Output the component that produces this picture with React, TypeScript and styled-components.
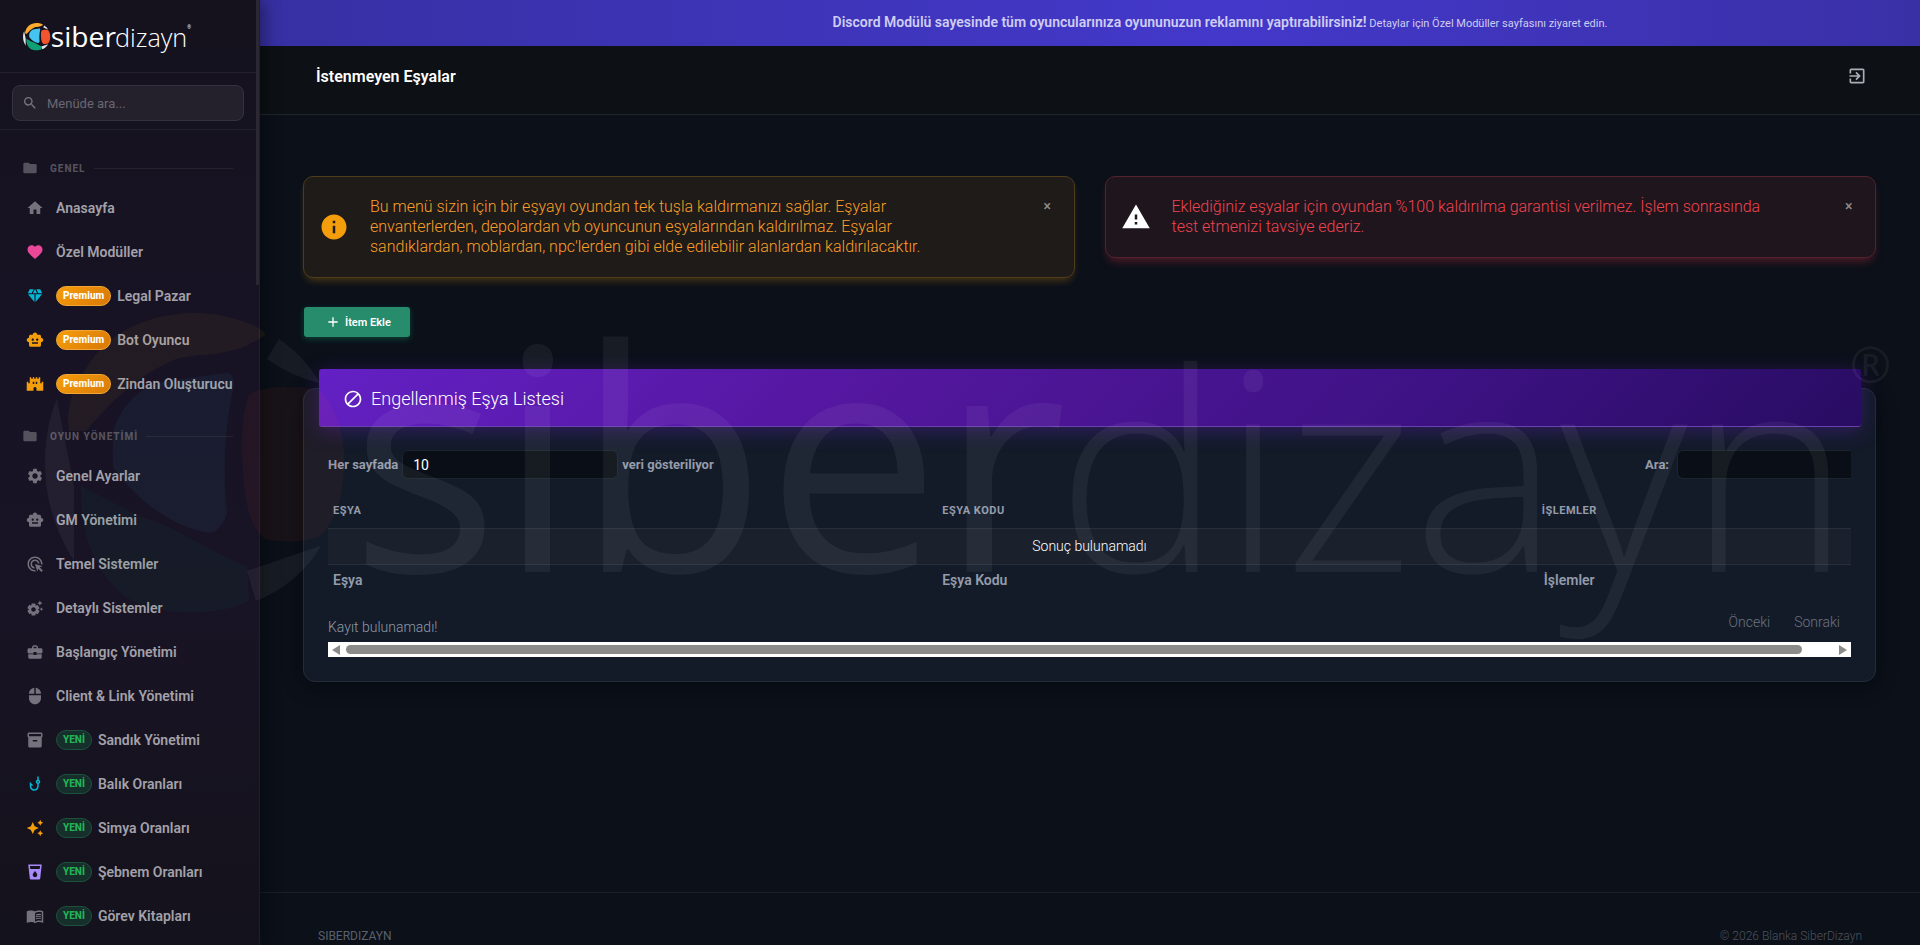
import React from 'react';
import styled, { createGlobalStyle, css } from 'styled-components';
import type { IconType } from 'react-icons';
import {
  MdAdd,
  MdAdsClick,
  MdAutoAwesome,
  MdBusinessCenter,
  MdCastle,
  MdDiamond,
  MdDoNotDisturbAlt,
  MdExitToApp,
  MdFavorite,
  MdFolder,
  MdHome,
  MdInfo,
  MdInventory2,
  MdLocalDrink,
  MdMenuBook,
  MdMouse,
  MdPhishing,
  MdSearch,
  MdSettings,
  MdSettingsSuggest,
  MdSmartToy,
  MdWarning,
} from 'react-icons/md';

const GlobalStyle = createGlobalStyle`
  *, *::before, *::after { box-sizing: border-box; }
  body {
    margin: 0;
    background: #0b1019;
    color: #8b92a5;
    font-family: Roboto, "Liberation Sans", sans-serif;
    font-size: 14px;
    font-weight: 300;
  }
  button, input, select { font: inherit; color: inherit; }
`;

/* ---------- Logo ---------- */

const LogoSvg = styled.svg`
  display: block;
  width: 100%;
  height: auto;
  overflow: visible;
`;

function Logo() {
  return (
    <LogoSvg viewBox="44 311 1848 336" role="img" aria-label="siberdizayn">
      <path fill="#ffab2e" d="M68 430C64 405 74 380 96 352C126 318 180 306 222 315C240 319 262 326 265 334C254 340 242 348 228 350C205 356 186 352 168 361C136 376 108 402 85 430Z" />
      <path fill="#45c4f0" d="M112 432C120 402 142 384 166 380L226 372C236 374 233 386 230 398C223 436 222 476 226 512C224 522 216 532 208 532C172 526 136 500 112 466Z" />
      <path fill="#f2542d" d="M248 394C262 384 300 384 320 390C338 410 345 440 343 470C341 502 332 524 318 536C300 542 276 542 264 538C250 528 243 500 242 466C240 436 242 410 248 394Z" />
      <path fill="#0f9f73" d="M80 485C110 500 132 514 152 520C176 528 204 548 246 566L248 600C218 616 160 616 128 598C96 576 78 534 80 485Z" />
      <path fill="#e6e4ea" d="M56 398L62 430C66 450 70 468 73 486V560C52 526 44 494 44 462C44 438 48 416 56 398Z" />
      <path fill="#e6e4ea" d="M278 338C296 350 310 366 319 382C300 378 284 370 266 358Z" />
      <path fill="#e6e4ea" d="M246 570L320 545C306 570 282 590 255 600Z" />
      <text x="350" y="571" fill="#fff" fontFamily="'Open Sans', sans-serif" fontWeight="400" fontSize="310">siber</text>
      <text x="1056" y="571" fill="#fff" fontFamily="'Open Sans', sans-serif" fontWeight="300" fontSize="278">dizayn</text>
      <text x="1850" y="382" fill="#fff" fontFamily="'Open Sans', sans-serif" fontWeight="400" fontSize="50">®</text>
    </LogoSvg>
  );
}

const Watermark = styled.div`
  position: fixed;
  inset: 0;
  z-index: 20;
  display: flex;
  align-items: center;
  justify-content: center;
  padding: 14px 0 0 16px;
  opacity: 0.055;
  pointer-events: none;
`;

const WatermarkInner = styled.div`
  width: 97%;
`;

/* ---------- Shell ---------- */

const Shell = styled.div`
  display: flex;
  min-height: 100vh;
`;

const Sidebar = styled.aside`
  position: sticky;
  top: 0;
  z-index: 2;
  flex: 0 0 260px;
  height: 100vh;
  overflow: hidden;
  background: linear-gradient(180deg, #15121e 0%, #171324 35%, #191425 62%, #14121c 100%);
  border-right: 1px solid #211e2b;
  box-shadow: 4px 0 16px rgba(0, 0, 0, 0.4);
`;

const SidebarThumb = styled.span`
  position: absolute;
  top: 0;
  right: 0;
  width: 3px;
  height: 285px;
  background: #2b2833;
`;

const Brand = styled.div`
  height: 73px;
  padding: 23px 68px 0 23px;
  border-bottom: 1px solid #24212e;
`;

const SearchWrap = styled.div`
  height: 57px;
  padding: 12px;
  border-bottom: 1px solid #24212e;
`;

const SearchField = styled.label`
  display: flex;
  align-items: center;
  gap: 9px;
  width: 232px;
  height: 36px;
  padding: 0 9px;
  border: 1px solid #35323f;
  border-radius: 8px;
  background: #24212d;
  color: #77747f;
`;

const SearchInput = styled.input`
  flex: 1;
  min-width: 0;
  padding: 0;
  border: 0;
  outline: 0;
  background: transparent;
  font-size: 13px;
  font-weight: 400;
  &::placeholder { color: #6a6772; opacity: 1; }
`;

const Nav = styled.nav`
  padding-top: 8px;
`;

const SectionLabel = styled.h2`
  display: flex;
  align-items: center;
  height: 48px;
  margin: 0;
  padding: 12px 26px 0 22px;
  color: #55525d;
  font-size: 10px;
  font-weight: 800;
  letter-spacing: 1px;
  svg { flex: none; margin-right: 12px; }
  &::after {
    content: "";
    flex: 1;
    height: 1px;
    margin-left: 8px;
    background: #26232f;
  }
`;

const NavList = styled.ul`
  margin: 0;
  padding: 0;
  list-style: none;
`;

const NavLink = styled.a<{ $icon: string }>`
  display: flex;
  align-items: center;
  height: 44px;
  padding-left: 26px;
  color: #a3a1a9;
  font-weight: 600;
  white-space: nowrap;
  text-decoration: none;
  > svg { flex: none; margin-right: 12px; color: ${(p) => p.$icon}; }
`;

const Badge = styled.span<{ $kind: 'premium' | 'new' }>`
  height: 20px;
  margin-right: 6px;
  padding: 0 6px;
  border: 1px solid;
  border-radius: 10px;
  font-size: 10px;
  font-weight: 800;
  line-height: 18px;
  ${(p) =>
    p.$kind === 'premium'
      ? css`
          border-color: #f0a636;
          background: linear-gradient(135deg, #f59e0b, #d97706);
          color: #fff;
        `
      : css`
          border-color: #1c5140;
          background: #172f2b;
          color: #20b457;
        `}
`;

interface Item {
  label: string;
  icon: IconType;
  color?: string;
  badge?: 'premium' | 'new';
}

const general: Item[] = [
  { label: 'Anasayfa', icon: MdHome },
  { label: 'Özel Modüller', icon: MdFavorite, color: '#ec4899' },
  { label: 'Legal Pazar', icon: MdDiamond, color: '#06b6d4', badge: 'premium' },
  { label: 'Bot Oyuncu', icon: MdSmartToy, color: '#f59e0b', badge: 'premium' },
  { label: 'Zindan Oluşturucu', icon: MdCastle, color: '#f59e0b', badge: 'premium' },
];

const game: Item[] = [
  { label: 'Genel Ayarlar', icon: MdSettings },
  { label: 'GM Yönetimi', icon: MdSmartToy },
  { label: 'Temel Sistemler', icon: MdAdsClick },
  { label: 'Detaylı Sistemler', icon: MdSettingsSuggest },
  { label: 'Başlangıç Yönetimi', icon: MdBusinessCenter },
  { label: 'Client & Link Yönetimi', icon: MdMouse },
  { label: 'Sandık Yönetimi', icon: MdInventory2, badge: 'new' },
  { label: 'Balık Oranları', icon: MdPhishing, color: '#06b6d4', badge: 'new' },
  { label: 'Simya Oranları', icon: MdAutoAwesome, color: '#f59e0b', badge: 'new' },
  { label: 'Şebnem Oranları', icon: MdLocalDrink, color: '#a78bfa', badge: 'new' },
  { label: 'Görev Kitapları', icon: MdMenuBook, badge: 'new' },
];

function NavSection({ title, items }: { title: string; items: Item[] }) {
  return (
    <section>
      <SectionLabel>
        <MdFolder size={16} />
        {title}
      </SectionLabel>
      <NavList>
        {items.map(({ label, icon: Icon, color = '#75727d', badge }) => (
          <li key={label}>
            <NavLink href="#" $icon={color}>
              <Icon size={18} />
              {badge && <Badge $kind={badge}>{badge === 'premium' ? 'Premium' : 'YENİ'}</Badge>}
              {label}
            </NavLink>
          </li>
        ))}
      </NavList>
    </section>
  );
}

/* ---------- Main column ---------- */

const Main = styled.div`
  display: flex;
  flex: 1;
  flex-direction: column;
  min-width: 0;
`;

const Banner = styled.div`
  height: 46px;
  padding-left: 260px;
  background: linear-gradient(90deg, #3730a3, #4338ca 58%, #3a30a6);
  color: #cfcdf2;
  font-size: 11px;
  font-weight: 400;
  line-height: 44px;
  text-align: center;
  strong { font-size: 14px; font-weight: 600; }
`;

const TopBar = styled.header`
  display: flex;
  align-items: flex-start;
  justify-content: space-between;
  height: 69px;
  padding: 20px 53px 0 56px;
  border-bottom: 1px solid #20242b;
  background: #0d1115;
`;

const PageTitle = styled.h1`
  margin: 0;
  color: #fff;
  font-size: 16px;
  font-weight: 600;
  line-height: 22px;
`;

const IconButton = styled.button`
  display: flex;
  padding: 0;
  border: 0;
  background: none;
  color: #a9adb8;
  cursor: pointer;
`;

const Content = styled.main`
  flex: 1;
  padding: 61px 44px 30px 43px;
`;

const Alerts = styled.div`
  display: grid;
  grid-template-columns: 1fr 1fr;
  align-items: start;
  gap: 30px;
`;

const Alert = styled.div<{ $tone: 'warning' | 'danger' }>`
  display: flex;
  align-items: center;
  padding: 20px 20px 20px 15px;
  border: 1px solid;
  border-radius: 10px;
  font-size: 16px;
  line-height: 20px;
  ${(p) =>
    p.$tone === 'warning'
      ? css`
          border-color: #4f3c1b;
          background: #1e1b18;
          color: #fb9f28;
          box-shadow: 0 5px 8px -3px rgba(245, 158, 11, 0.3);
        `
      : css`
          border-color: #56212e;
          background: #1f151d;
          color: #f0444f;
          box-shadow: 0 6px 10px -3px rgba(220, 53, 69, 0.35);
        `}
  > svg { flex: none; margin-right: 21px; }
`;

const AlertText = styled.p`
  flex: 1;
  margin: 0;
  padding-right: 72px;
`;

const CloseButton = styled(IconButton)`
  align-self: flex-start;
  width: 10px;
  color: #8f8c8c;
  font-size: 14px;
  font-weight: 500;
  line-height: 18px;
`;

const AddButton = styled.button`
  display: flex;
  align-items: center;
  gap: 4px;
  height: 30px;
  margin: 29px 0 32px 1px;
  padding: 0 19px 0 21px;
  border: 0;
  border-radius: 3px;
  background: #268c6c;
  color: #fff;
  font-size: 11px;
  font-weight: 600;
  box-shadow: 0 2px 6px rgba(16, 185, 129, 0.3);
  cursor: pointer;
`;

const Card = styled.section`
  margin-top: 51px;
  padding: 0 24px 24px;
  border: 1px solid #232c37;
  border-radius: 12px;
  background: #131b29;
  box-shadow: 0 4px 20px rgba(0, 0, 0, 0.4);
`;

const CardHeader = styled.div`
  display: flex;
  align-items: center;
  gap: 8px;
  height: 58px;
  margin: -20px -10px 23px -9px;
  padding: 2px 24px 0;
  border-bottom: 1px solid #6a3fae;
  border-radius: 3px;
  background: linear-gradient(135deg, #6320c4 0%, #54179f 35%, #3e1285 70%, #280c62 100%);
  box-shadow: 0 4px 20px rgba(91, 33, 182, 0.4);
  color: #fff;
  h2 {
    margin: 0;
    font-size: 18px;
    font-weight: 300;
  }
`;

const Controls = styled.div`
  display: flex;
  align-items: center;
  justify-content: space-between;
  color: #959cab;
  font-size: 13px;
  font-weight: 700;
`;

const Field = styled.label`
  display: flex;
  align-items: center;
  gap: 4px;
`;

const fieldBox = css`
  height: 29px;
  padding: 0 10px;
  border: 1px solid #1c242e;
  border-radius: 6px;
  outline: 0;
  background: #0a0f17;
  color: #fff;
  font-size: 14px;
  font-weight: 400;
`;

const LengthSelect = styled.select`
  ${fieldBox}
  width: 216px;
  appearance: none;
`;

const FilterInput = styled.input`
  ${fieldBox}
  width: 174px;
  margin-left: 4px;
  border-right: 0;
  border-radius: 6px 0 0 6px;
`;

const Table = styled.table`
  width: 100%;
  margin-top: 14px;
  border-collapse: collapse;
  table-layout: fixed;
  th {
    height: 35px;
    padding: 0 5px;
    color: #949bab;
    font-weight: 600;
    text-align: left;
  }
  th:last-child { text-align: center; }
  thead th {
    font-size: 11px;
    font-weight: 700;
    letter-spacing: 0.5px;
    text-transform: uppercase;
  }
  tfoot th { height: 32px; }
  tbody td {
    height: 36px;
    border: solid #26303a;
    border-width: 1px 0;
    background: #1a212d;
    color: #fff;
    text-align: center;
  }
  col:nth-child(1) { width: 40%; }
  col:nth-child(2) { width: 23%; }
`;

const TableFoot = styled.div`
  display: flex;
  justify-content: space-between;
  height: 46px;
  color: #9199a8;
  line-height: 20px;
`;

const Info = styled.span`
  padding-top: 21px;
`;

const Pager = styled.div`
  display: flex;
  align-items: flex-start;
  gap: 24px;
  padding: 16px 11px 0 0;
  button {
    padding: 0;
    border: 0;
    background: none;
    color: #6b7381;
    line-height: 20px;
  }
`;

const ScrollTrack = styled.div`
  display: flex;
  align-items: center;
  height: 15px;
  padding: 0 4px;
  background: #fff;
`;

const ScrollThumb = styled.span`
  flex: 1;
  height: 9px;
  margin: 0 37px 0 6px;
  border-radius: 5px;
  background: #8b8b89;
`;

const Arrow = styled.span<{ $dir: 'left' | 'right' }>`
  border: 5px solid transparent;
  border-${(p) => (p.$dir === 'left' ? 'left' : 'right')}-width: 0;
  border-${(p) => (p.$dir === 'left' ? 'right' : 'left')}: 8px solid #8b8b89;
`;

const Footer = styled.footer`
  display: flex;
  justify-content: space-between;
  height: 53px;
  padding: 34px 58px 0;
  border-top: 1px solid #1a1f29;
  color: #4d535e;
  font-size: 12px;
  line-height: 18px;
  a { color: #5a606c; font-weight: 400; text-decoration: none; }
`;

export default function App() {
  return (
    <>
      <GlobalStyle />
      <Shell>
        <Sidebar>
          <Brand>
            <Logo />
          </Brand>
          <SearchWrap>
            <SearchField>
              <MdSearch size={16} />
              <SearchInput type="text" placeholder="Menüde ara..." aria-label="Menüde ara" />
            </SearchField>
          </SearchWrap>
          <Nav>
            <NavSection title="GENEL" items={general} />
            <NavSection title="OYUN YÖNETİMİ" items={game} />
          </Nav>
          <SidebarThumb />
        </Sidebar>
        <Main>
          <Banner>
            <strong>Discord Modülü sayesinde tüm oyuncularınıza oyununuzun reklamını yaptırabilirsiniz!</strong>{' '}
            Detaylar için Özel Modüller sayfasını ziyaret edin.
          </Banner>
          <TopBar>
            <PageTitle>İstenmeyen Eşyalar</PageTitle>
            <IconButton type="button" aria-label="Çıkış">
              <MdExitToApp size={20} />
            </IconButton>
          </TopBar>
          <Content>
            <Alerts>
              <Alert $tone="warning">
                <MdInfo size={30} color="#f59e0b" />
                <AlertText>
                  Bu menü sizin için bir eşyayı oyundan tek tuşla kaldırmanızı sağlar. Eşyalar envanterlerden,
                  depolardan vb oyuncunun eşyalarından kaldırılmaz. Eşyalar sandıklardan, moblardan, npc'lerden
                  gibi elde edilebilir alanlardan kaldırılacaktır.
                </AlertText>
                <CloseButton type="button" aria-label="Kapat">×</CloseButton>
              </Alert>
              <Alert $tone="danger">
                <MdWarning size={30} color="#fff" />
                <AlertText>
                  Eklediğiniz eşyalar için oyundan %100 kaldırılma garantisi verilmez. İşlem sonrasında test
                  etmenizi tavsiye ederiz.
                </AlertText>
                <CloseButton type="button" aria-label="Kapat">×</CloseButton>
              </Alert>
            </Alerts>
            <AddButton type="button">
              <MdAdd size={16} />
              İtem Ekle
            </AddButton>
            <Card>
              <CardHeader>
                <MdDoNotDisturbAlt size={20} />
                <h2>Engellenmiş Eşya Listesi</h2>
              </CardHeader>
              <Controls>
                <Field>
                  Her sayfada
                  <LengthSelect defaultValue="10">
                    <option>10</option>
                    <option>25</option>
                    <option>50</option>
                  </LengthSelect>
                  veri gösteriliyor
                </Field>
                <Field>
                  Ara:
                  <FilterInput type="search" />
                </Field>
              </Controls>
              <Table>
                <colgroup>
                  <col />
                  <col />
                  <col />
                </colgroup>
                <thead>
                  <tr>
                    <th>Eşya</th>
                    <th>Eşya Kodu</th>
                    <th>İşlemler</th>
                  </tr>
                </thead>
                <tfoot>
                  <tr>
                    <th>Eşya</th>
                    <th>Eşya Kodu</th>
                    <th>İşlemler</th>
                  </tr>
                </tfoot>
                <tbody>
                  <tr>
                    <td colSpan={3}>Sonuç bulunamadı</td>
                  </tr>
                </tbody>
              </Table>
              <TableFoot>
                <Info>Kayıt bulunamadı!</Info>
                <Pager>
                  <button type="button">Önceki</button>
                  <button type="button">Sonraki</button>
                </Pager>
              </TableFoot>
              <ScrollTrack>
                <Arrow $dir="left" />
                <ScrollThumb />
                <Arrow $dir="right" />
              </ScrollTrack>
            </Card>
          </Content>
          <Footer>
            <a href="#">SIBERDIZAYN</a>
            <span>© 2026 Blanka SiberDizayn</span>
          </Footer>
        </Main>
      </Shell>
      <Watermark aria-hidden="true">
        <WatermarkInner>
          <Logo />
        </WatermarkInner>
      </Watermark>
    </>
  );
}
